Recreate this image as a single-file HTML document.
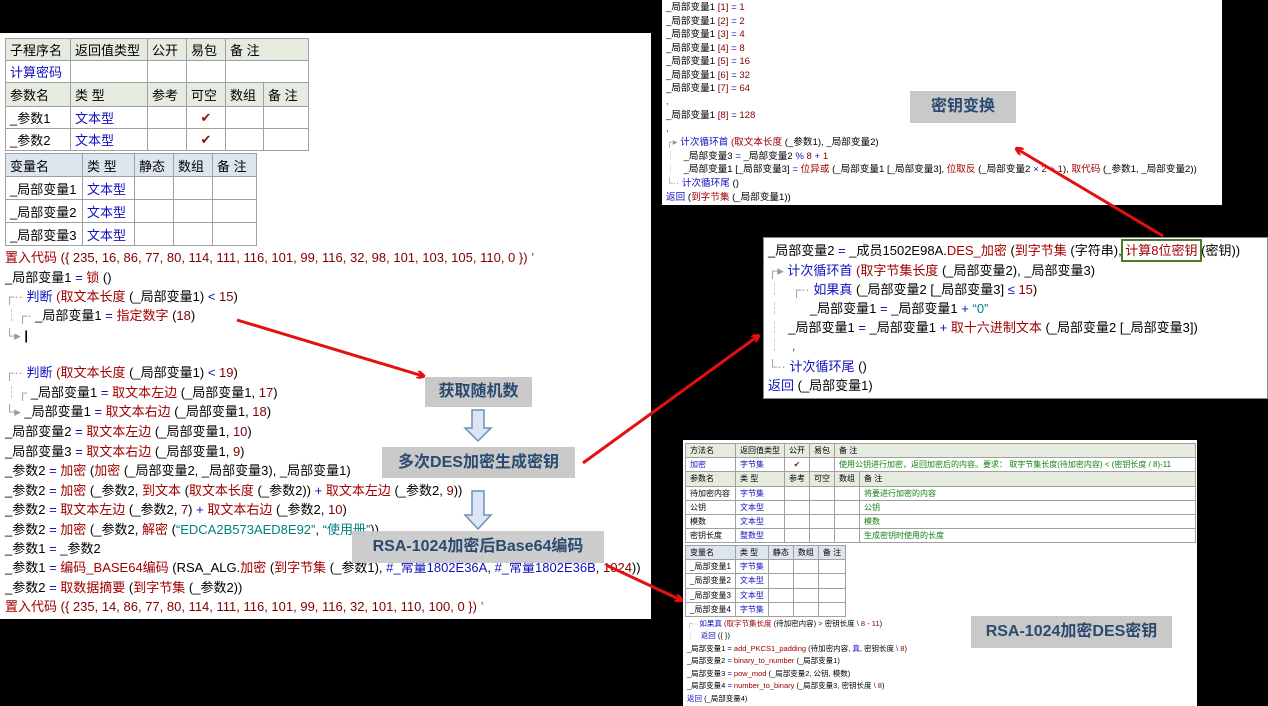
<!DOCTYPE html>
<html><head><meta charset="utf-8">
<style>
*{margin:0;padding:0;box-sizing:border-box}
body{width:1268px;height:706px;background:#000;position:relative;overflow:hidden;font-family:"Liberation Sans","WenQuanYi Zen Hei","Noto Sans CJK SC",sans-serif;color:#000}
.p{position:absolute;background:#fff}
.l{position:absolute;white-space:nowrap;font-size:13px;line-height:16px}
.s{font-size:9.6px;line-height:12px}
.m{font-size:7.5px;line-height:11px}
.b{color:#1010c0}.r{color:#a00000}.n{color:#800000}.g{color:#008080}.gr{color:#108010}
table{position:absolute;border-collapse:collapse;font-size:13px}
td{border:1px solid #a0a0a0;padding:0 4px;white-space:nowrap;overflow:hidden}
.hg td{background:#e6ebe0}
.hb td{background:#dde5ef}
.lab{position:absolute;background:#c9c9c9;color:#2a4a70;font-weight:bold;text-align:center;font-family:"Liberation Sans","Noto Sans CJK SC",sans-serif}
.ck{color:#8b1010;text-align:center}
</style></head><body>

<!-- LEFT PANEL -->
<div class="p" style="left:0;top:33px;width:651px;height:586px"></div>
<table style="left:5px;top:38px;width:304px">
<tr class="hg" style="height:22px"><td style="width:65px">子程序名</td><td style="width:77px">返回值类型</td><td style="width:39px">公开</td><td style="width:39px">易包</td><td colspan="2">备 注</td></tr>
<tr style="height:22px"><td class="b">计算密码</td><td></td><td></td><td></td><td colspan="2"></td></tr>
<tr class="hg" style="height:24px"><td>参数名</td><td>类 型</td><td>参考</td><td>可空</td><td style="width:38px">数组</td><td>备 注</td></tr>
<tr style="height:22px"><td>_参数1</td><td class="b">文本型</td><td></td><td class="ck">✔</td><td></td><td></td></tr>
<tr style="height:22px"><td>_参数2</td><td class="b">文本型</td><td></td><td class="ck">✔</td><td></td><td></td></tr>
</table>
<table style="left:5px;top:153px;width:252px">
<tr class="hb" style="height:23px"><td style="width:77px">变量名</td><td style="width:52px">类 型</td><td style="width:39px">静态</td><td style="width:39px">数组</td><td>备 注</td></tr>
<tr style="height:23px"><td>_局部变量1</td><td class="b">文本型</td><td></td><td></td><td></td></tr>
<tr style="height:23px"><td>_局部变量2</td><td class="b">文本型</td><td></td><td></td><td></td></tr>
<tr style="height:23px"><td>_局部变量3</td><td class="b">文本型</td><td></td><td></td><td></td></tr>
</table>

<div class="l r" style="left:5px;top:250px">置入代码 <span class="n">({ 235, 16, 86, 77, 80, 114, 111, 116, 101, 99, 116, 32, 98, 101, 103, 105, 110, 0 })</span> <span class="gr">’</span></div>
<div class="l" style="left:5px;top:270px">_局部变量1 <span class="b">=</span> <span class="r">锁</span> ()</div>
<div class="l" style="left:5px;top:289px"><span style="color:#999">┌··</span> <span class="b">判断</span> <span class="r">(取文本长度</span> (_局部变量1) <span class="b">&lt;</span> <span class="n">15</span>)</div>
<div class="l" style="left:5px;top:308px"><span style="color:#999">┆┌·</span> _局部变量1 <span class="b">=</span> <span class="r">指定数字</span> (<span class="n">18</span>)</div>
<div class="l" style="left:5px;top:328px"><span style="color:#999">└▸</span> <b>|</b></div>
<div class="l" style="left:5px;top:365px"><span style="color:#999">┌··</span> <span class="b">判断</span> <span class="r">(取文本长度</span> (_局部变量1) <span class="b">&lt;</span> <span class="n">19</span>)</div>
<div class="l" style="left:5px;top:385px"><span style="color:#999">┆┌</span> _局部变量1 <span class="b">=</span> <span class="r">取文本左边</span> (_局部变量1, <span class="n">17</span>)</div>
<div class="l" style="left:5px;top:404px"><span style="color:#999">└▸</span> _局部变量1 <span class="b">=</span> <span class="r">取文本右边</span> (_局部变量1, <span class="n">18</span>)</div>
<div class="l" style="left:5px;top:424px">_局部变量2 <span class="b">=</span> <span class="r">取文本左边</span> (_局部变量1, <span class="n">10</span>)</div>
<div class="l" style="left:5px;top:444px">_局部变量3 <span class="b">=</span> <span class="r">取文本右边</span> (_局部变量1, <span class="n">9</span>)</div>
<div class="l" style="left:5px;top:463px">_参数2 <span class="b">=</span> <span class="r">加密</span> (<span class="r">加密</span> (_局部变量2, _局部变量3), _局部变量1)</div>
<div class="l" style="left:5px;top:483px">_参数2 <span class="b">=</span> <span class="r">加密</span> (_参数2, <span class="r">到文本</span> (<span class="r">取文本长度</span> (_参数2)) <span class="b">+</span> <span class="r">取文本左边</span> (_参数2, <span class="n">9</span>))</div>
<div class="l" style="left:5px;top:502px">_参数2 <span class="b">=</span> <span class="r">取文本左边</span> (_参数2, <span class="n">7</span>) <span class="b">+</span> <span class="r">取文本右边</span> (_参数2, <span class="n">10</span>)</div>
<div class="l" style="left:5px;top:522px">_参数2 <span class="b">=</span> <span class="r">加密</span> (_参数2, <span class="r">解密</span> (<span class="g">“EDCA2B573AED8E92”</span>, <span class="g">“使用册”</span>))</div>
<div class="l" style="left:5px;top:541px">_参数1 <span class="b">=</span> _参数2</div>
<div class="l" style="left:5px;top:560px">_参数1 <span class="b">=</span> <span class="r">编码_BASE64编码</span> (RSA_ALG.<span class="r">加密</span> (<span class="r">到字节集</span> (_参数1), <span class="b">#_常量1802E36A</span>, <span class="b">#_常量1802E36B</span>, <span class="n">1024</span>))</div>
<div class="l" style="left:5px;top:580px">_参数2 <span class="b">=</span> <span class="r">取数据摘要</span> (<span class="r">到字节集</span> (_参数2))</div>
<div class="l r" style="left:5px;top:599px">置入代码 <span class="n">({ 235, 14, 86, 77, 80, 114, 111, 116, 101, 99, 116, 32, 101, 110, 100, 0 })</span> <span class="gr">’</span></div>

<div class="lab" style="left:425px;top:377px;width:107px;height:30px;font-size:16px;line-height:30px">获取随机数</div>
<div class="lab" style="left:382px;top:447px;width:193px;height:31px;font-size:16px;line-height:31px">多次DES加密生成密钥</div>
<div class="lab" style="left:352px;top:531px;width:252px;height:32px;font-size:16px;line-height:32px;background:rgba(201,201,201,.92)">RSA-1024加密后Base64编码</div>
<svg style="position:absolute;left:462px;top:408px" width="32" height="125"><path d="M10 2H22V20H29L16 33L3 20H10Z" fill="#dbe5f4" stroke="#6f8fb8" stroke-width="1.5"/><path d="M10 83H22V107H29L16 121L3 107H10Z" fill="#dbe5f4" stroke="#6f8fb8" stroke-width="1.5"/></svg>

<!-- TOP RIGHT PANEL -->
<div class="p" style="left:662px;top:0;width:560px;height:205px"></div>
<div class="l s" style="left:666px;top:2px">_局部变量1 <span class="n">[1]</span> <span class="b">=</span> <span class="n">1</span></div>
<div class="l s" style="left:666px;top:16px">_局部变量1 <span class="n">[2]</span> <span class="b">=</span> <span class="n">2</span></div>
<div class="l s" style="left:666px;top:29px">_局部变量1 <span class="n">[3]</span> <span class="b">=</span> <span class="n">4</span></div>
<div class="l s" style="left:666px;top:43px">_局部变量1 <span class="n">[4]</span> <span class="b">=</span> <span class="n">8</span></div>
<div class="l s" style="left:666px;top:56px">_局部变量1 <span class="n">[5]</span> <span class="b">=</span> <span class="n">16</span></div>
<div class="l s" style="left:666px;top:70px">_局部变量1 <span class="n">[6]</span> <span class="b">=</span> <span class="n">32</span></div>
<div class="l s" style="left:666px;top:83px">_局部变量1 <span class="n">[7]</span> <span class="b">=</span> <span class="n">64</span></div>
<div class="l s gr" style="left:666px;top:96px">,</div>
<div class="l s" style="left:666px;top:110px">_局部变量1 <span class="n">[8]</span> <span class="b">=</span> <span class="n">128</span></div>
<div class="l s gr" style="left:666px;top:123px">,</div>
<div class="l s" style="left:666px;top:137px"><span style="color:#999">┌▸</span> <span class="b">计次循环首</span> <span class="r">(取文本长度</span> (_参数1), _局部变量2)</div>
<div class="l s" style="left:666px;top:151px"><span style="color:#999">┆</span>&nbsp;&nbsp;&nbsp;_局部变量3 <span class="b">=</span> _局部变量2 <span class="b">%</span> <span class="n">8</span> <span class="b">+</span> <span class="n">1</span></div>
<div class="l s" style="left:666px;top:164px"><span style="color:#999">┆</span>&nbsp;&nbsp;&nbsp;_局部变量1 [_局部变量3] <span class="b">=</span> <span class="r">位异或</span> (_局部变量1 [_局部变量3], <span class="r">位取反</span> (_局部变量2 <span class="b">×</span> <span class="n">2</span> <span class="b">+</span> <span class="n">1</span>), <span class="r">取代码</span> (_参数1, _局部变量2))</div>
<div class="l s" style="left:666px;top:178px"><span style="color:#999">└··</span> <span class="b">计次循环尾</span> ()</div>
<div class="l s" style="left:666px;top:192px"><span class="b">返回</span> (<span class="r">到字节集</span> (_局部变量1))</div>
<div class="lab" style="left:910px;top:91px;width:106px;height:32px;font-size:16px;line-height:32px">密钥变换</div>

<!-- MIDDLE RIGHT PANEL -->
<div class="p" style="left:763px;top:237px;width:505px;height:162px;border:1px solid #888"></div>
<div class="l" style="left:768px;top:243px">_局部变量2 <span class="b">=</span> _成员1502E98A.<span class="r">DES_加密</span> (<span class="r">到字节集</span> (字符串), <span class="r" style="outline:2px solid #4a7a2a;outline-offset:2px">计算8位密钥</span> (密钥))</div>
<div class="l" style="left:768px;top:263px"><span style="color:#999">┌▸</span> <span class="b">计次循环首</span> <span class="r">(取字节集长度</span> (_局部变量2), _局部变量3)</div>
<div class="l" style="left:768px;top:282px"><span style="color:#999">┆</span>&nbsp;&nbsp;&nbsp;<span style="color:#999">┌··</span> <span class="b">如果真</span> (_局部变量2 [_局部变量3] <span class="b">≤</span> <span class="n">15</span>)</div>
<div class="l" style="left:768px;top:301px"><span style="color:#999">┆</span>&nbsp;&nbsp;&nbsp;&nbsp;&nbsp;&nbsp;&nbsp;&nbsp;_局部变量1 <span class="b">=</span> _局部变量1 <span class="b">+</span> <span class="g">“0”</span></div>
<div class="l" style="left:768px;top:320px"><span style="color:#999">┆</span>&nbsp;&nbsp;_局部变量1 <span class="b">=</span> _局部变量1 <span class="b">+</span> <span class="r">取十六进制文本</span> (_局部变量2 [_局部变量3])</div>
<div class="l gr" style="left:768px;top:338px"><span style="color:#999">┆</span>&nbsp;&nbsp;&nbsp;,</div>
<div class="l" style="left:768px;top:359px"><span style="color:#999">└··</span> <span class="b">计次循环尾</span> ()</div>
<div class="l" style="left:768px;top:378px"><span class="b">返回</span> (_局部变量1)</div>

<!-- BOTTOM RIGHT PANEL -->
<div class="p" style="left:683px;top:440px;width:514px;height:266px"></div>
<table style="left:685px;top:443px;width:511px;font-size:8px;line-height:12px">
<tr class="hg" style="height:14px"><td style="width:50px">方法名</td><td style="width:49px">返回值类型</td><td style="width:25px">公开</td><td style="width:24px">易包</td><td colspan="2">备 注</td></tr>
<tr style="height:14px"><td class="b">加密</td><td class="b">字节集</td><td class="ck">✔</td><td></td><td colspan="2" class="gr">使用公钥进行加密，返回加密后的内容。要求： 取字节集长度(待加密内容) &lt; (密钥长度 / 8)-11</td></tr>
<tr class="hg" style="height:15px"><td>参数名</td><td>类 型</td><td>参考</td><td>可空</td><td style="width:24px">数组</td><td>备 注</td></tr>
<tr style="height:14px"><td>待加密内容</td><td class="b">字节集</td><td></td><td></td><td></td><td class="gr">将要进行加密的内容</td></tr>
<tr style="height:14px"><td>公钥</td><td class="b">文本型</td><td></td><td></td><td></td><td class="gr">公钥</td></tr>
<tr style="height:14px"><td>模数</td><td class="b">文本型</td><td></td><td></td><td></td><td class="gr">模数</td></tr>
<tr style="height:14px"><td>密钥长度</td><td class="b">整数型</td><td></td><td></td><td></td><td class="gr">生成密钥时使用的长度</td></tr>
</table>
<table style="left:685px;top:545px;width:161px;font-size:8px;line-height:12px">
<tr class="hb" style="height:14px"><td style="width:50px">变量名</td><td style="width:33px">类 型</td><td style="width:25px">静态</td><td style="width:25px">数组</td><td>备 注</td></tr>
<tr style="height:14px"><td>_局部变量1</td><td class="b">字节集</td><td></td><td></td><td></td></tr>
<tr style="height:15px"><td>_局部变量2</td><td class="b">文本型</td><td></td><td></td><td></td></tr>
<tr style="height:14px"><td>_局部变量3</td><td class="b">文本型</td><td></td><td></td><td></td></tr>
<tr style="height:14px"><td>_局部变量4</td><td class="b">字节集</td><td></td><td></td><td></td></tr>
</table>
<div class="l m" style="left:687px;top:618px"><span style="color:#999">┌··</span> <span class="b">如果真</span> <span class="r">(取字节集长度</span> (待加密内容) <span class="b">&gt;</span> 密钥长度 <span class="b">\</span> <span class="n">8</span> <span class="b">-</span> <span class="n">11</span>)</div>
<div class="l m" style="left:687px;top:630px"><span style="color:#999">┆</span>&nbsp;&nbsp;&nbsp;<span class="b">返回</span> ({ })</div>
<div class="l m" style="left:687px;top:643px">_局部变量1 <span class="b">=</span> <span class="r">add_PKCS1_padding</span> (待加密内容, <span class="b">真</span>, 密钥长度 <span class="b">\</span> <span class="n">8</span>)</div>
<div class="l m" style="left:687px;top:655px">_局部变量2 <span class="b">=</span> <span class="r">binary_to_number</span> (_局部变量1)</div>
<div class="l m" style="left:687px;top:668px">_局部变量3 <span class="b">=</span> <span class="r">pow_mod</span> (_局部变量2, 公钥, 模数)</div>
<div class="l m" style="left:687px;top:680px">_局部变量4 <span class="b">=</span> <span class="r">number_to_binary</span> (_局部变量3, 密钥长度 <span class="b">\</span> <span class="n">8</span>)</div>
<div class="l m" style="left:687px;top:693px"><span class="b">返回</span> (_局部变量4)</div>
<div class="lab" style="left:971px;top:616px;width:201px;height:32px;font-size:16px;line-height:32px">RSA-1024加密DES密钥</div>

<!-- RED ARROWS -->
<svg style="position:absolute;left:0;top:0" width="1268" height="706">
<defs><marker id="a" markerWidth="8" markerHeight="8" refX="6" refY="4" orient="auto" markerUnits="userSpaceOnUse"><path d="M0,0 L8,4 L0,8" fill="none" stroke="#e41010" stroke-width="2.5"/></marker></defs>
<g stroke="#e41010" stroke-width="3" fill="none" marker-end="url(#a)">
<line x1="237" y1="320" x2="423" y2="376"/>
<line x1="583" y1="463" x2="758" y2="336"/>
<line x1="1163" y1="236" x2="1017" y2="149"/>
<line x1="606" y1="565" x2="681" y2="600"/>
</g></svg>
</body></html>
